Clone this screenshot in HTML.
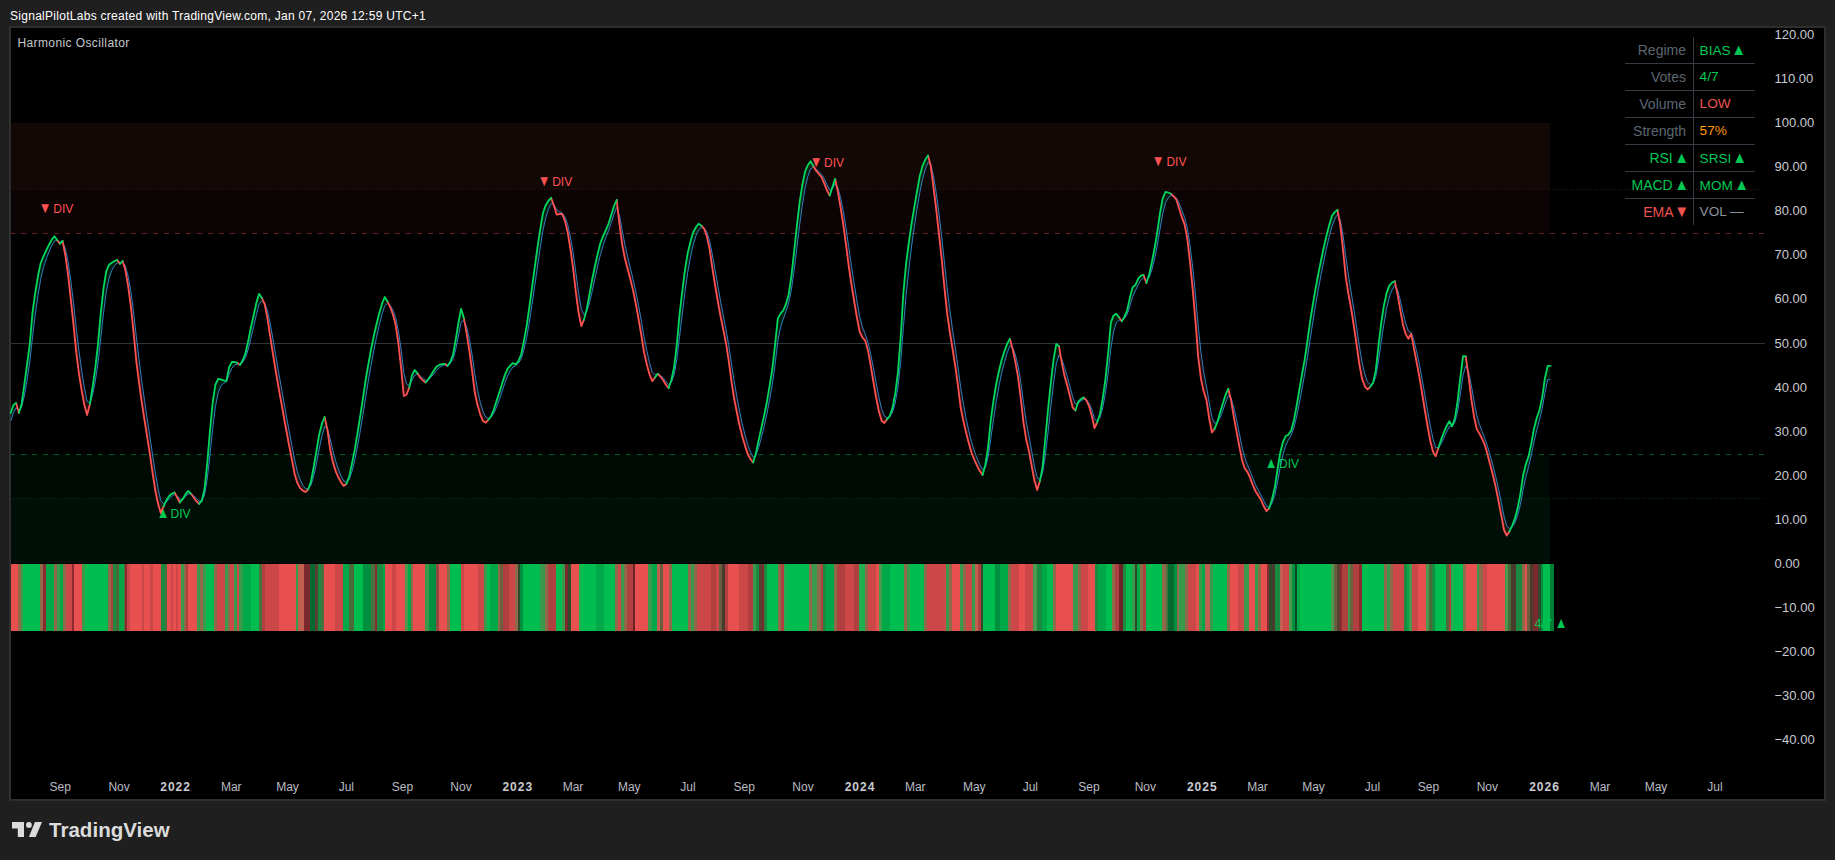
<!DOCTYPE html>
<html lang="en"><head><meta charset="utf-8"><title>Harmonic Oscillator</title>
<style>
html,body{margin:0;padding:0;background:#1f1f1f;}
body{width:1835px;height:860px;position:relative;overflow:hidden;font-family:"Liberation Sans",Arial,sans-serif;}
.hdr{position:absolute;left:10px;top:9px;font-size:12px;line-height:15px;color:#fff;white-space:nowrap;letter-spacing:0.28px;}
.frame{position:absolute;left:9px;top:26px;width:1813px;height:771px;border:2px solid #2e2e2e;background:#000;}
.chart{position:absolute;left:0;top:0;}
.ttl{position:absolute;left:17.4px;top:36px;font-size:12px;line-height:15px;color:#c4c6cc;white-space:nowrap;letter-spacing:0.4px;}
.div{position:absolute;font-size:12px;line-height:16px;white-space:nowrap;}
.tri{display:inline-block;font-size:14px;line-height:16px;width:8px;text-indent:-2.9px;margin-right:4px;transform:scale(0.92,1.1);transform-origin:50% 75%;vertical-align:top;position:relative;}
.tri.up{top:-1px;} .tri.dn{top:-0.6px;}
.pl{position:absolute;left:1774.5px;font-size:13px;line-height:16px;color:#c9cbd1;white-space:nowrap;}
.tl{position:absolute;top:779px;width:60px;text-align:center;font-size:12px;line-height:16px;color:#b9bbc2;white-space:nowrap;}
.tl.yr{font-weight:bold;letter-spacing:1px;color:#c9cbd1;text-indent:1px;}
.tbl{position:absolute;left:1625px;top:37px;width:130px;}
.tr{display:flex;height:26px;border-bottom:1px solid #363a45;}
.tr:last-child{border-bottom:none;}
.tc{font-size:14px;line-height:26px;white-space:nowrap;box-sizing:border-box;}
.tc.l{width:69px;text-align:right;padding-right:7px;border-right:1px solid #363a45;}
.tc.r{width:61px;text-align:left;padding-left:5.6px;font-size:13.6px;}
.tt{display:inline-block;font-size:15.5px;width:9.4px;text-indent:-3.1px;transform:scale(0.97,1.06);transform-origin:50% 75%;}
.gy{color:#5d6670;} .gy2{color:#8a939c;} .gr{color:#00c853;} .rd{color:#ef5350;} .or{color:#ff9800;}
.votes{position:absolute;left:1534.6px;top:615.5px;font-size:12.5px;line-height:16px;color:#00c853;white-space:nowrap;}
.logo{position:absolute;left:12px;top:822px;}
.logot{position:absolute;left:49px;top:817px;font-size:20.5px;line-height:26px;font-weight:bold;color:#dcdcdc;white-space:nowrap;letter-spacing:0.03px;}
</style></head><body>
<div class="hdr">SignalPilotLabs created with TradingView.com, Jan 07, 2026 12:59 UTC+1</div>
<div class="frame"></div>
<svg class="chart" width="1835" height="860" viewBox="0 0 1835 860">
<rect x="11" y="123" width="1539" height="66" fill="#120806"/>
<rect x="11" y="189" width="1539" height="45" fill="#0c0304"/>
<rect x="11" y="454" width="1539" height="44" fill="#000a05"/>
<rect x="11" y="498" width="1539" height="65" fill="#001008"/>
<g shape-rendering="crispEdges">
<line x1="11" x2="1764.5" y1="189.5" y2="189.5" stroke="#3b1818" stroke-width="1" stroke-dasharray="1 2" stroke-dashoffset="1"/>
<line x1="11" x2="1764.5" y1="233.5" y2="233.5" stroke="#642323" stroke-width="1" stroke-dasharray="5 6" stroke-dashoffset="1"/>
<line x1="11" x2="1764.5" y1="343.5" y2="343.5" stroke="#2d343a" stroke-width="1"/>
<line x1="11" x2="1764.5" y1="454.5" y2="454.5" stroke="#005a28" stroke-width="1" stroke-dasharray="5 6" stroke-dashoffset="1"/>
<line x1="11" x2="1764.5" y1="498.5" y2="498.5" stroke="#043819" stroke-width="1" stroke-dasharray="1 2" stroke-dashoffset="1"/>
</g>
<g shape-rendering="crispEdges">
<rect x="10.7" y="564.0" width="7.8" height="67.0" fill="#e85050"/>
<rect x="18.2" y="564.0" width="2.8" height="67.0" fill="#8f6a48"/>
<rect x="20.7" y="564.0" width="2.2" height="67.0" fill="#3a9a4c"/>
<rect x="22.6" y="564.0" width="17.9" height="67.0" fill="#00bd50"/>
<rect x="40.2" y="564.0" width="3.1" height="67.0" fill="#8f6a48"/>
<rect x="43.0" y="564.0" width="3.2" height="67.0" fill="#8b2a30"/>
<rect x="45.9" y="564.0" width="8.4" height="67.0" fill="#00a848"/>
<rect x="54.0" y="564.0" width="3.5" height="67.0" fill="#8f6a48"/>
<rect x="57.2" y="564.0" width="3.1" height="67.0" fill="#3a9a4c"/>
<rect x="60.0" y="564.0" width="3.3" height="67.0" fill="#00a848"/>
<rect x="63.0" y="564.0" width="3.3" height="67.0" fill="#8f6a48"/>
<rect x="66.0" y="564.0" width="6.5" height="67.0" fill="#cc4848"/>
<rect x="72.2" y="564.0" width="2.0" height="67.0" fill="#8b2a30"/>
<rect x="73.9" y="564.0" width="8.3" height="67.0" fill="#e85050"/>
<rect x="81.9" y="564.0" width="3.6" height="67.0" fill="#3a9a4c"/>
<rect x="85.2" y="564.0" width="23.1" height="67.0" fill="#00bd50"/>
<rect x="108.0" y="564.0" width="3.5" height="67.0" fill="#8f6a48"/>
<rect x="111.2" y="564.0" width="2.1" height="67.0" fill="#b04040"/>
<rect x="113.0" y="564.0" width="2.9" height="67.0" fill="#1a8a40"/>
<rect x="115.6" y="564.0" width="3.4" height="67.0" fill="#4a6a3a"/>
<rect x="118.7" y="564.0" width="5.3" height="67.0" fill="#00a848"/>
<rect x="123.7" y="564.0" width="2.0" height="67.0" fill="#4a7040"/>
<rect x="125.4" y="564.0" width="1.8" height="67.0" fill="#8b2a30"/>
<rect x="126.9" y="564.0" width="3.4" height="67.0" fill="#cc4848"/>
<rect x="130.0" y="564.0" width="12.3" height="67.0" fill="#e85050"/>
<rect x="142.0" y="564.0" width="2.1" height="67.0" fill="#cc4848"/>
<rect x="143.8" y="564.0" width="6.5" height="67.0" fill="#e85050"/>
<rect x="150.0" y="564.0" width="3.3" height="67.0" fill="#cc4848"/>
<rect x="153.0" y="564.0" width="8.1" height="67.0" fill="#e85050"/>
<rect x="160.8" y="564.0" width="4.1" height="67.0" fill="#1a8a40"/>
<rect x="164.6" y="564.0" width="2.7" height="67.0" fill="#4a7040"/>
<rect x="167.0" y="564.0" width="4.3" height="67.0" fill="#e85050"/>
<rect x="171.0" y="564.0" width="2.3" height="67.0" fill="#cc4848"/>
<rect x="173.0" y="564.0" width="3.3" height="67.0" fill="#e85050"/>
<rect x="176.0" y="564.0" width="2.3" height="67.0" fill="#cc4848"/>
<rect x="178.0" y="564.0" width="3.3" height="67.0" fill="#e85050"/>
<rect x="181.0" y="564.0" width="3.3" height="67.0" fill="#3a9a4c"/>
<rect x="184.0" y="564.0" width="2.3" height="67.0" fill="#8f6a48"/>
<rect x="186.0" y="564.0" width="2.7" height="67.0" fill="#b04040"/>
<rect x="188.4" y="564.0" width="8.9" height="67.0" fill="#e85050"/>
<rect x="197.0" y="564.0" width="3.0" height="67.0" fill="#3a9a4c"/>
<rect x="199.7" y="564.0" width="3.5" height="67.0" fill="#8f6a48"/>
<rect x="202.9" y="564.0" width="3.4" height="67.0" fill="#3a9a4c"/>
<rect x="206.0" y="564.0" width="8.5" height="67.0" fill="#00bd50"/>
<rect x="214.2" y="564.0" width="3.1" height="67.0" fill="#8f6a48"/>
<rect x="217.0" y="564.0" width="8.2" height="67.0" fill="#cc4848"/>
<rect x="224.9" y="564.0" width="3.4" height="67.0" fill="#3a9a4c"/>
<rect x="228.0" y="564.0" width="2.3" height="67.0" fill="#8f6a48"/>
<rect x="230.0" y="564.0" width="4.1" height="67.0" fill="#cc4848"/>
<rect x="233.8" y="564.0" width="3.4" height="67.0" fill="#3a9a4c"/>
<rect x="236.9" y="564.0" width="2.4" height="67.0" fill="#cc4848"/>
<rect x="239.0" y="564.0" width="3.9" height="67.0" fill="#3a9a4c"/>
<rect x="242.6" y="564.0" width="8.4" height="67.0" fill="#00a848"/>
<rect x="250.7" y="564.0" width="8.5" height="67.0" fill="#00bd50"/>
<rect x="258.9" y="564.0" width="3.4" height="67.0" fill="#4a7040"/>
<rect x="262.0" y="564.0" width="3.5" height="67.0" fill="#b04040"/>
<rect x="265.2" y="564.0" width="14.1" height="67.0" fill="#cc4848"/>
<rect x="279.0" y="564.0" width="17.3" height="67.0" fill="#e85050"/>
<rect x="296.0" y="564.0" width="2.1" height="67.0" fill="#3a9a4c"/>
<rect x="297.8" y="564.0" width="6.5" height="67.0" fill="#c06050"/>
<rect x="304.0" y="564.0" width="6.3" height="67.0" fill="#7a2a2c"/>
<rect x="310.0" y="564.0" width="5.7" height="67.0" fill="#066a30"/>
<rect x="315.4" y="564.0" width="2.9" height="67.0" fill="#5a4030"/>
<rect x="318.0" y="564.0" width="3.3" height="67.0" fill="#1a8a40"/>
<rect x="321.0" y="564.0" width="3.3" height="67.0" fill="#4a7040"/>
<rect x="324.0" y="564.0" width="11.2" height="67.0" fill="#e85050"/>
<rect x="334.9" y="564.0" width="8.4" height="67.0" fill="#cc4848"/>
<rect x="343.0" y="564.0" width="6.0" height="67.0" fill="#00a848"/>
<rect x="348.7" y="564.0" width="5.3" height="67.0" fill="#4a6a3a"/>
<rect x="353.7" y="564.0" width="9.8" height="67.0" fill="#00bd50"/>
<rect x="363.2" y="564.0" width="8.4" height="67.0" fill="#009040"/>
<rect x="371.3" y="564.0" width="3.5" height="67.0" fill="#4a7040"/>
<rect x="374.5" y="564.0" width="2.5" height="67.0" fill="#8b2a30"/>
<rect x="376.7" y="564.0" width="6.2" height="67.0" fill="#1a8a40"/>
<rect x="382.6" y="564.0" width="2.8" height="67.0" fill="#00a848"/>
<rect x="385.1" y="564.0" width="7.2" height="67.0" fill="#e85050"/>
<rect x="392.0" y="564.0" width="4.3" height="67.0" fill="#cc4848"/>
<rect x="396.0" y="564.0" width="9.5" height="67.0" fill="#e85050"/>
<rect x="405.2" y="564.0" width="3.5" height="67.0" fill="#4a9a50"/>
<rect x="408.4" y="564.0" width="3.0" height="67.0" fill="#00a848"/>
<rect x="411.1" y="564.0" width="2.6" height="67.0" fill="#8f6a48"/>
<rect x="413.4" y="564.0" width="11.9" height="67.0" fill="#e85050"/>
<rect x="425.0" y="564.0" width="3.8" height="67.0" fill="#3a9a4c"/>
<rect x="428.5" y="564.0" width="7.8" height="67.0" fill="#009040"/>
<rect x="436.0" y="564.0" width="3.5" height="67.0" fill="#904840"/>
<rect x="439.2" y="564.0" width="8.4" height="67.0" fill="#e85050"/>
<rect x="447.3" y="564.0" width="2.8" height="67.0" fill="#8f6a48"/>
<rect x="449.8" y="564.0" width="11.8" height="67.0" fill="#00bd50"/>
<rect x="461.3" y="564.0" width="2.8" height="67.0" fill="#cc4848"/>
<rect x="463.8" y="564.0" width="14.1" height="67.0" fill="#e85050"/>
<rect x="477.6" y="564.0" width="6.6" height="67.0" fill="#cc4848"/>
<rect x="483.9" y="564.0" width="3.4" height="67.0" fill="#3a9a4c"/>
<rect x="487.0" y="564.0" width="3.5" height="67.0" fill="#00bd50"/>
<rect x="490.2" y="564.0" width="7.8" height="67.0" fill="#00a848"/>
<rect x="497.7" y="564.0" width="2.8" height="67.0" fill="#8f6a48"/>
<rect x="500.2" y="564.0" width="3.4" height="67.0" fill="#6a6040"/>
<rect x="503.3" y="564.0" width="6.0" height="67.0" fill="#b04040"/>
<rect x="509.0" y="564.0" width="6.6" height="67.0" fill="#cc4848"/>
<rect x="515.3" y="564.0" width="2.8" height="67.0" fill="#8f6a48"/>
<rect x="517.8" y="564.0" width="2.5" height="67.0" fill="#304a2c"/>
<rect x="520.0" y="564.0" width="3.1" height="67.0" fill="#009040"/>
<rect x="522.8" y="564.0" width="17.9" height="67.0" fill="#00bd50"/>
<rect x="540.4" y="564.0" width="5.1" height="67.0" fill="#3a9a4c"/>
<rect x="545.2" y="564.0" width="3.1" height="67.0" fill="#8f6a48"/>
<rect x="548.0" y="564.0" width="8.4" height="67.0" fill="#b04040"/>
<rect x="556.1" y="564.0" width="6.2" height="67.0" fill="#00bd50"/>
<rect x="562.0" y="564.0" width="3.3" height="67.0" fill="#3a9a4c"/>
<rect x="565.0" y="564.0" width="3.3" height="67.0" fill="#7a2a2c"/>
<rect x="568.0" y="564.0" width="3.5" height="67.0" fill="#304a2c"/>
<rect x="571.2" y="564.0" width="7.8" height="67.0" fill="#e85050"/>
<rect x="578.7" y="564.0" width="2.8" height="67.0" fill="#20b050"/>
<rect x="581.2" y="564.0" width="15.4" height="67.0" fill="#00bd50"/>
<rect x="596.3" y="564.0" width="7.8" height="67.0" fill="#00a848"/>
<rect x="603.8" y="564.0" width="11.7" height="67.0" fill="#00bd50"/>
<rect x="615.2" y="564.0" width="3.4" height="67.0" fill="#8f6a48"/>
<rect x="618.3" y="564.0" width="3.0" height="67.0" fill="#cc4848"/>
<rect x="621.0" y="564.0" width="3.3" height="67.0" fill="#3a9a4c"/>
<rect x="624.0" y="564.0" width="3.3" height="67.0" fill="#8f6a48"/>
<rect x="627.0" y="564.0" width="6.0" height="67.0" fill="#b04040"/>
<rect x="632.7" y="564.0" width="2.5" height="67.0" fill="#6a2428"/>
<rect x="634.9" y="564.0" width="13.8" height="67.0" fill="#e85050"/>
<rect x="648.4" y="564.0" width="4.1" height="67.0" fill="#3a9a4c"/>
<rect x="652.2" y="564.0" width="5.1" height="67.0" fill="#00a848"/>
<rect x="657.0" y="564.0" width="3.0" height="67.0" fill="#c06050"/>
<rect x="659.7" y="564.0" width="3.5" height="67.0" fill="#6a6040"/>
<rect x="662.9" y="564.0" width="6.6" height="67.0" fill="#e85050"/>
<rect x="669.2" y="564.0" width="3.1" height="67.0" fill="#8f6a48"/>
<rect x="672.0" y="564.0" width="16.3" height="67.0" fill="#00bd50"/>
<rect x="688.0" y="564.0" width="3.6" height="67.0" fill="#8f6a48"/>
<rect x="691.3" y="564.0" width="3.0" height="67.0" fill="#3a9a4c"/>
<rect x="694.0" y="564.0" width="3.2" height="67.0" fill="#8f6a48"/>
<rect x="696.9" y="564.0" width="14.1" height="67.0" fill="#cc4848"/>
<rect x="710.7" y="564.0" width="6.0" height="67.0" fill="#b04040"/>
<rect x="716.4" y="564.0" width="3.0" height="67.0" fill="#cc4848"/>
<rect x="719.1" y="564.0" width="3.2" height="67.0" fill="#6a6040"/>
<rect x="722.0" y="564.0" width="3.2" height="67.0" fill="#4a3c2c"/>
<rect x="724.9" y="564.0" width="3.1" height="67.0" fill="#b04040"/>
<rect x="727.7" y="564.0" width="11.6" height="67.0" fill="#e85050"/>
<rect x="739.0" y="564.0" width="9.7" height="67.0" fill="#cc4848"/>
<rect x="748.4" y="564.0" width="4.7" height="67.0" fill="#b04040"/>
<rect x="752.8" y="564.0" width="3.5" height="67.0" fill="#3a9a4c"/>
<rect x="756.0" y="564.0" width="3.1" height="67.0" fill="#1a8a40"/>
<rect x="758.8" y="564.0" width="3.1" height="67.0" fill="#5a4030"/>
<rect x="761.6" y="564.0" width="2.6" height="67.0" fill="#7a2a2c"/>
<rect x="763.9" y="564.0" width="3.7" height="67.0" fill="#1a8a40"/>
<rect x="767.3" y="564.0" width="10.9" height="67.0" fill="#00bd50"/>
<rect x="777.9" y="564.0" width="3.5" height="67.0" fill="#8f6a48"/>
<rect x="781.1" y="564.0" width="3.2" height="67.0" fill="#b04040"/>
<rect x="784.0" y="564.0" width="3.0" height="67.0" fill="#20b050"/>
<rect x="786.7" y="564.0" width="22.3" height="67.0" fill="#00bd50"/>
<rect x="808.7" y="564.0" width="3.5" height="67.0" fill="#8f6a48"/>
<rect x="811.9" y="564.0" width="5.3" height="67.0" fill="#3a9a4c"/>
<rect x="816.9" y="564.0" width="4.1" height="67.0" fill="#8f6a48"/>
<rect x="820.7" y="564.0" width="2.5" height="67.0" fill="#b04040"/>
<rect x="822.9" y="564.0" width="3.7" height="67.0" fill="#1a8a40"/>
<rect x="826.3" y="564.0" width="7.8" height="67.0" fill="#00a848"/>
<rect x="833.8" y="564.0" width="3.5" height="67.0" fill="#8f6a48"/>
<rect x="837.0" y="564.0" width="8.5" height="67.0" fill="#b04040"/>
<rect x="845.2" y="564.0" width="9.1" height="67.0" fill="#cc4848"/>
<rect x="854.0" y="564.0" width="5.3" height="67.0" fill="#b04040"/>
<rect x="859.0" y="564.0" width="6.2" height="67.0" fill="#20b050"/>
<rect x="864.9" y="564.0" width="3.2" height="67.0" fill="#8f6a48"/>
<rect x="867.8" y="564.0" width="8.4" height="67.0" fill="#cc4848"/>
<rect x="875.9" y="564.0" width="3.5" height="67.0" fill="#e85050"/>
<rect x="879.1" y="564.0" width="3.2" height="67.0" fill="#4a9a50"/>
<rect x="882.0" y="564.0" width="8.0" height="67.0" fill="#00a848"/>
<rect x="889.7" y="564.0" width="14.8" height="67.0" fill="#00bd50"/>
<rect x="904.2" y="564.0" width="3.2" height="67.0" fill="#8f6a48"/>
<rect x="907.1" y="564.0" width="3.0" height="67.0" fill="#3a9a4c"/>
<rect x="909.8" y="564.0" width="14.5" height="67.0" fill="#00bd50"/>
<rect x="924.0" y="564.0" width="3.2" height="67.0" fill="#8f6a48"/>
<rect x="926.9" y="564.0" width="19.2" height="67.0" fill="#cc4848"/>
<rect x="945.8" y="564.0" width="3.4" height="67.0" fill="#3a9a4c"/>
<rect x="948.9" y="564.0" width="3.4" height="67.0" fill="#8f6a48"/>
<rect x="952.0" y="564.0" width="8.5" height="67.0" fill="#e85050"/>
<rect x="960.2" y="564.0" width="3.1" height="67.0" fill="#3a9a4c"/>
<rect x="963.0" y="564.0" width="3.2" height="67.0" fill="#8f6a48"/>
<rect x="965.9" y="564.0" width="6.2" height="67.0" fill="#cc4848"/>
<rect x="971.8" y="564.0" width="3.8" height="67.0" fill="#3a9a4c"/>
<rect x="975.3" y="564.0" width="3.4" height="67.0" fill="#c06050"/>
<rect x="978.4" y="564.0" width="2.8" height="67.0" fill="#b04040"/>
<rect x="980.9" y="564.0" width="2.2" height="67.0" fill="#304a2c"/>
<rect x="982.8" y="564.0" width="12.6" height="67.0" fill="#00bd50"/>
<rect x="995.1" y="564.0" width="5.0" height="67.0" fill="#009040"/>
<rect x="999.8" y="564.0" width="8.5" height="67.0" fill="#00a848"/>
<rect x="1008.0" y="564.0" width="3.3" height="67.0" fill="#8f6a48"/>
<rect x="1011.0" y="564.0" width="7.9" height="67.0" fill="#cc4848"/>
<rect x="1018.6" y="564.0" width="6.6" height="67.0" fill="#e85050"/>
<rect x="1024.9" y="564.0" width="8.4" height="67.0" fill="#cc4848"/>
<rect x="1033.0" y="564.0" width="4.1" height="67.0" fill="#4a9a50"/>
<rect x="1036.8" y="564.0" width="5.4" height="67.0" fill="#1a8a40"/>
<rect x="1041.9" y="564.0" width="5.4" height="67.0" fill="#00a848"/>
<rect x="1047.0" y="564.0" width="6.5" height="67.0" fill="#00bd50"/>
<rect x="1053.2" y="564.0" width="3.1" height="67.0" fill="#8f6a48"/>
<rect x="1056.0" y="564.0" width="17.3" height="67.0" fill="#e85050"/>
<rect x="1073.0" y="564.0" width="5.3" height="67.0" fill="#3a9a4c"/>
<rect x="1078.0" y="564.0" width="3.3" height="67.0" fill="#8f6a48"/>
<rect x="1081.0" y="564.0" width="7.6" height="67.0" fill="#cc4848"/>
<rect x="1088.3" y="564.0" width="7.2" height="67.0" fill="#e85050"/>
<rect x="1095.2" y="564.0" width="2.9" height="67.0" fill="#1a8a40"/>
<rect x="1097.8" y="564.0" width="8.5" height="67.0" fill="#00a848"/>
<rect x="1106.0" y="564.0" width="6.5" height="67.0" fill="#00bd50"/>
<rect x="1112.2" y="564.0" width="3.1" height="67.0" fill="#8f6a48"/>
<rect x="1115.0" y="564.0" width="3.8" height="67.0" fill="#b04040"/>
<rect x="1118.5" y="564.0" width="4.7" height="67.0" fill="#6a2428"/>
<rect x="1122.9" y="564.0" width="3.4" height="67.0" fill="#1a8a40"/>
<rect x="1126.0" y="564.0" width="6.6" height="67.0" fill="#00bd50"/>
<rect x="1132.3" y="564.0" width="3.0" height="67.0" fill="#3a9a4c"/>
<rect x="1135.0" y="564.0" width="2.0" height="67.0" fill="#304a2c"/>
<rect x="1136.7" y="564.0" width="3.4" height="67.0" fill="#00a848"/>
<rect x="1139.8" y="564.0" width="3.5" height="67.0" fill="#8f6a48"/>
<rect x="1143.0" y="564.0" width="3.2" height="67.0" fill="#b04040"/>
<rect x="1145.9" y="564.0" width="16.3" height="67.0" fill="#00bd50"/>
<rect x="1161.9" y="564.0" width="4.1" height="67.0" fill="#8f6a48"/>
<rect x="1165.7" y="564.0" width="2.6" height="67.0" fill="#4a7040"/>
<rect x="1168.0" y="564.0" width="6.2" height="67.0" fill="#066a30"/>
<rect x="1173.9" y="564.0" width="3.4" height="67.0" fill="#009040"/>
<rect x="1177.0" y="564.0" width="2.4" height="67.0" fill="#8f6a48"/>
<rect x="1179.1" y="564.0" width="6.1" height="67.0" fill="#3a9a4c"/>
<rect x="1184.9" y="564.0" width="3.1" height="67.0" fill="#8f6a48"/>
<rect x="1187.7" y="564.0" width="8.5" height="67.0" fill="#cc4848"/>
<rect x="1195.9" y="564.0" width="3.4" height="67.0" fill="#e85050"/>
<rect x="1199.0" y="564.0" width="3.1" height="67.0" fill="#3a9a4c"/>
<rect x="1201.8" y="564.0" width="3.8" height="67.0" fill="#00a848"/>
<rect x="1205.3" y="564.0" width="5.0" height="67.0" fill="#c06050"/>
<rect x="1210.0" y="564.0" width="3.1" height="67.0" fill="#3a9a4c"/>
<rect x="1212.8" y="564.0" width="14.4" height="67.0" fill="#00bd50"/>
<rect x="1226.9" y="564.0" width="3.2" height="67.0" fill="#8f6a48"/>
<rect x="1229.8" y="564.0" width="8.4" height="67.0" fill="#e85050"/>
<rect x="1237.9" y="564.0" width="6.4" height="67.0" fill="#cc4848"/>
<rect x="1244.0" y="564.0" width="5.3" height="67.0" fill="#3a9a4c"/>
<rect x="1249.0" y="564.0" width="6.2" height="67.0" fill="#e85050"/>
<rect x="1254.9" y="564.0" width="3.4" height="67.0" fill="#3a9a4c"/>
<rect x="1258.0" y="564.0" width="3.2" height="67.0" fill="#8f6a48"/>
<rect x="1260.9" y="564.0" width="6.2" height="67.0" fill="#e85050"/>
<rect x="1266.8" y="564.0" width="2.2" height="67.0" fill="#8b2a30"/>
<rect x="1268.7" y="564.0" width="3.5" height="67.0" fill="#304a2c"/>
<rect x="1271.9" y="564.0" width="3.4" height="67.0" fill="#4a3c2c"/>
<rect x="1275.0" y="564.0" width="5.3" height="67.0" fill="#1a8a40"/>
<rect x="1280.0" y="564.0" width="3.5" height="67.0" fill="#c06050"/>
<rect x="1283.2" y="564.0" width="5.9" height="67.0" fill="#cc4848"/>
<rect x="1288.8" y="564.0" width="3.5" height="67.0" fill="#4a9a50"/>
<rect x="1292.0" y="564.0" width="3.4" height="67.0" fill="#009040"/>
<rect x="1295.1" y="564.0" width="1.9" height="67.0" fill="#064a28"/>
<rect x="1296.7" y="564.0" width="3.6" height="67.0" fill="#00a848"/>
<rect x="1300.0" y="564.0" width="31.2" height="67.0" fill="#00bd50"/>
<rect x="1330.9" y="564.0" width="3.4" height="67.0" fill="#4a9a50"/>
<rect x="1334.0" y="564.0" width="3.5" height="67.0" fill="#6a6040"/>
<rect x="1337.2" y="564.0" width="3.4" height="67.0" fill="#5a4030"/>
<rect x="1340.3" y="564.0" width="2.2" height="67.0" fill="#8b2a30"/>
<rect x="1342.2" y="564.0" width="6.0" height="67.0" fill="#b04040"/>
<rect x="1347.9" y="564.0" width="2.8" height="67.0" fill="#3a9a4c"/>
<rect x="1350.4" y="564.0" width="3.2" height="67.0" fill="#6a6040"/>
<rect x="1353.3" y="564.0" width="6.2" height="67.0" fill="#b04040"/>
<rect x="1359.2" y="564.0" width="3.1" height="67.0" fill="#8b2a30"/>
<rect x="1362.0" y="564.0" width="22.3" height="67.0" fill="#00bd50"/>
<rect x="1384.0" y="564.0" width="3.2" height="67.0" fill="#8f6a48"/>
<rect x="1386.9" y="564.0" width="3.4" height="67.0" fill="#3a9a4c"/>
<rect x="1390.0" y="564.0" width="3.5" height="67.0" fill="#8f6a48"/>
<rect x="1393.2" y="564.0" width="11.0" height="67.0" fill="#cc4848"/>
<rect x="1403.9" y="564.0" width="3.4" height="67.0" fill="#1a8a40"/>
<rect x="1407.0" y="564.0" width="2.4" height="67.0" fill="#00a848"/>
<rect x="1409.1" y="564.0" width="3.2" height="67.0" fill="#4a9a50"/>
<rect x="1412.0" y="564.0" width="6.0" height="67.0" fill="#cc4848"/>
<rect x="1417.7" y="564.0" width="8.5" height="67.0" fill="#e85050"/>
<rect x="1425.9" y="564.0" width="3.4" height="67.0" fill="#4a9a50"/>
<rect x="1429.0" y="564.0" width="3.1" height="67.0" fill="#4a6a3a"/>
<rect x="1431.8" y="564.0" width="3.4" height="67.0" fill="#1a8a40"/>
<rect x="1434.9" y="564.0" width="11.4" height="67.0" fill="#00bd50"/>
<rect x="1446.0" y="564.0" width="3.1" height="67.0" fill="#4a6a3a"/>
<rect x="1448.8" y="564.0" width="2.5" height="67.0" fill="#b04040"/>
<rect x="1451.0" y="564.0" width="3.4" height="67.0" fill="#20b050"/>
<rect x="1454.1" y="564.0" width="9.1" height="67.0" fill="#00bd50"/>
<rect x="1462.9" y="564.0" width="3.5" height="67.0" fill="#8f6a48"/>
<rect x="1466.1" y="564.0" width="10.9" height="67.0" fill="#e85050"/>
<rect x="1476.7" y="564.0" width="2.8" height="67.0" fill="#3a9a4c"/>
<rect x="1479.2" y="564.0" width="4.1" height="67.0" fill="#8f6a48"/>
<rect x="1483.0" y="564.0" width="4.7" height="67.0" fill="#cc4848"/>
<rect x="1487.4" y="564.0" width="17.9" height="67.0" fill="#e85050"/>
<rect x="1505.0" y="564.0" width="3.4" height="67.0" fill="#4a9a50"/>
<rect x="1508.1" y="564.0" width="3.5" height="67.0" fill="#4a6a3a"/>
<rect x="1511.3" y="564.0" width="4.9" height="67.0" fill="#4a3c2c"/>
<rect x="1515.9" y="564.0" width="6.4" height="67.0" fill="#1a8a40"/>
<rect x="1522.0" y="564.0" width="2.8" height="67.0" fill="#8f6a48"/>
<rect x="1524.5" y="564.0" width="3.0" height="67.0" fill="#e85050"/>
<rect x="1527.2" y="564.0" width="3.2" height="67.0" fill="#6a6040"/>
<rect x="1530.1" y="564.0" width="3.2" height="67.0" fill="#4a3c2c"/>
<rect x="1533.0" y="564.0" width="5.3" height="67.0" fill="#7a2a2c"/>
<rect x="1538.0" y="564.0" width="3.1" height="67.0" fill="#304a2c"/>
<rect x="1540.8" y="564.0" width="2.8" height="67.0" fill="#009040"/>
<rect x="1543.3" y="564.0" width="7.1" height="67.0" fill="#00bd50"/>
<rect x="1550.1" y="564.0" width="3.4" height="67.0" fill="#008035"/>
</g>
<path d="M10.7 413.0 L13.4 405.0 L16.1 403.0 L18.9 413.0 L18.9 410.5 L16.1 408.0 L13.4 413.0 L10.7 421.0Z M21.6 403.9 L24.3 384.6 L27.1 364.2 L29.8 344.0 L32.5 312.4 L35.2 293.0 L38.0 275.8 L40.7 263.0 L43.4 256.3 L46.2 250.3 L48.9 244.9 L51.6 239.8 L54.4 236.2 L57.1 240.0 L59.8 243.8 L59.8 242.1 L57.1 240.5 L54.4 241.1 L51.6 245.9 L48.9 252.0 L46.2 259.0 L43.4 267.7 L40.7 279.2 L38.0 295.5 L35.2 315.1 L32.5 337.2 L29.8 362.0 L27.1 380.1 L24.3 395.9 L21.6 407.2Z M62.6 241.0 L65.3 255.0 L65.3 248.3 L62.6 241.6Z M92.6 387.0 L95.3 367.9 L98.0 344.2 L100.8 312.9 L103.5 288.3 L106.2 271.5 L109.0 264.7 L111.7 262.7 L114.4 261.1 L117.2 260.0 L119.9 263.8 L119.9 263.3 L117.2 262.9 L114.4 265.8 L111.7 270.6 L109.0 278.5 L106.2 292.3 L103.5 313.1 L100.8 337.8 L98.0 362.8 L95.3 381.4 L92.6 394.9Z M122.6 261.0 L125.3 269.9 L125.3 266.0 L122.6 262.2Z M166.3 500.3 L169.0 496.2 L171.8 493.8 L174.5 492.5 L177.2 497.5 L177.2 496.0 L174.5 494.5 L171.8 496.5 L169.0 499.1 L166.3 502.0Z M182.7 499.1 L185.4 494.4 L188.1 491.0 L190.9 493.6 L193.6 497.4 L193.6 495.6 L190.9 493.7 L188.1 493.9 L185.4 496.8 L182.7 499.2Z M201.8 500.7 L204.5 489.3 L207.2 463.5 L210.0 430.3 L212.7 402.4 L215.4 384.7 L218.2 378.8 L220.9 379.4 L223.6 380.3 L226.4 381.0 L229.1 367.1 L231.8 362.0 L234.5 362.0 L237.3 362.8 L240.0 365.0 L240.0 364.5 L237.3 364.0 L234.5 365.2 L231.8 368.3 L229.1 374.6 L226.4 382.1 L223.6 383.2 L220.9 386.1 L218.2 392.7 L215.4 406.7 L212.7 428.6 L210.0 454.8 L207.2 479.3 L204.5 495.1 L201.8 500.9Z M242.7 360.3 L245.5 353.2 L248.2 341.0 L250.9 327.4 L253.7 315.0 L256.4 302.6 L259.1 293.8 L261.8 297.9 L264.6 304.0 L264.6 302.5 L261.8 301.0 L259.1 304.2 L256.4 314.7 L253.7 326.7 L250.9 338.4 L248.2 349.4 L245.5 357.8 L242.7 362.4Z M311.0 481.4 L313.7 467.0 L316.4 451.2 L319.2 434.4 L321.9 423.7 L324.6 417.0 L327.4 429.8 L327.4 428.2 L324.6 426.7 L321.9 436.4 L319.2 449.0 L316.4 463.7 L313.7 476.1 L311.0 485.2Z M349.2 476.5 L351.9 463.9 L354.7 449.9 L357.4 433.6 L360.1 416.7 L362.9 398.4 L365.6 380.2 L368.3 364.3 L371.0 349.6 L373.8 335.8 L376.5 324.2 L379.2 313.3 L382.0 303.7 L384.7 297.0 L387.4 301.2 L390.2 307.3 L390.2 305.4 L387.4 303.5 L384.7 305.8 L382.0 314.5 L379.2 325.3 L376.5 337.4 L373.8 350.6 L371.0 365.3 L368.3 381.0 L365.6 397.7 L362.9 415.2 L360.1 431.9 L357.4 447.2 L354.7 460.7 L351.9 471.6 L349.2 479.4Z M412.0 375.1 L414.7 370.0 L417.5 373.3 L420.2 377.7 L420.2 376.0 L417.5 374.2 L414.7 375.2 L412.0 380.3Z M428.4 379.1 L431.1 374.9 L433.8 370.5 L436.6 366.5 L439.3 364.9 L442.0 364.2 L444.8 363.8 L447.5 366.0 L447.5 365.4 L444.8 364.8 L442.0 365.9 L439.3 367.6 L436.6 370.2 L433.8 373.9 L431.1 377.3 L428.4 379.8Z M450.2 362.0 L452.9 355.2 L455.7 339.6 L458.4 322.8 L461.1 308.8 L463.9 318.2 L466.6 333.4 L466.6 326.9 L463.9 320.3 L461.1 322.4 L458.4 336.1 L455.7 349.5 L452.9 359.5 L450.2 363.7Z M491.2 415.9 L493.9 409.3 L496.6 400.8 L499.4 392.2 L502.1 383.5 L504.8 375.1 L507.5 368.9 L510.3 365.4 L513.0 363.0 L515.7 364.5 L518.5 360.9 L521.2 354.3 L523.9 340.8 L526.7 325.6 L529.4 306.6 L532.1 286.5 L534.8 266.6 L537.6 246.6 L540.3 228.7 L543.0 213.0 L545.8 204.9 L548.5 200.7 L551.2 198.0 L554.0 206.0 L554.0 204.8 L551.2 203.6 L548.5 209.1 L545.8 217.5 L543.0 230.2 L540.3 247.4 L537.6 266.0 L534.8 285.4 L532.1 304.3 L529.4 322.1 L526.7 337.7 L523.9 349.8 L521.2 358.8 L518.5 363.3 L515.7 365.7 L513.0 366.9 L510.3 370.8 L507.5 376.1 L504.8 383.3 L502.1 391.6 L499.4 399.6 L496.6 407.0 L493.9 413.2 L491.2 417.1Z M586.7 309.3 L589.4 294.6 L592.2 279.3 L594.9 266.3 L597.6 254.1 L600.4 243.0 L603.1 236.1 L605.8 230.1 L608.6 223.5 L611.3 214.7 L614.0 206.0 L616.7 200.0 L619.5 224.3 L619.5 215.7 L616.7 207.2 L614.0 214.4 L611.3 222.7 L608.6 230.6 L605.8 237.7 L603.1 245.4 L600.4 254.7 L597.6 266.4 L594.9 278.8 L592.2 291.3 L589.4 303.2 L586.7 311.9Z M657.7 373.8 L660.4 376.5 L660.4 375.4 L657.7 374.2Z M671.3 380.2 L674.1 367.3 L676.8 344.5 L679.5 314.8 L682.3 290.7 L685.0 269.6 L687.7 253.1 L690.5 241.5 L693.2 232.2 L695.9 227.2 L698.6 223.8 L701.4 225.7 L704.1 228.6 L704.1 228.2 L701.4 227.7 L698.6 229.8 L695.9 235.9 L693.2 244.6 L690.5 257.0 L687.7 272.4 L685.0 291.8 L682.3 314.0 L679.5 337.2 L676.8 359.7 L674.1 374.9 L671.3 382.5Z M756.0 452.9 L758.7 439.9 L761.4 427.6 L764.2 415.0 L766.9 401.7 L769.6 385.8 L772.4 368.0 L775.1 344.4 L777.8 318.7 L780.5 313.6 L783.3 310.3 L786.0 303.8 L788.7 294.5 L791.5 275.1 L794.2 250.5 L796.9 225.8 L799.7 201.7 L802.4 184.6 L805.1 171.5 L807.8 165.2 L810.6 161.2 L813.3 165.7 L816.0 170.7 L816.0 169.0 L813.3 167.3 L810.6 168.9 L807.8 176.6 L805.1 188.1 L802.4 204.7 L799.7 224.7 L796.9 247.8 L794.2 269.8 L791.5 289.0 L788.7 302.9 L786.0 311.4 L783.3 318.9 L780.5 327.5 L777.8 341.4 L775.1 364.2 L772.4 384.0 L769.6 399.9 L766.9 414.0 L764.2 426.3 L761.4 437.6 L758.7 447.5 L756.0 455.1Z M832.4 187.1 L835.1 178.8 L837.9 191.8 L837.9 187.8 L835.1 183.7 L832.4 188.6Z M889.7 416.1 L892.5 407.9 L895.2 393.7 L897.9 372.6 L900.7 337.1 L903.4 292.3 L906.1 263.5 L908.9 242.2 L911.6 223.3 L914.3 207.2 L917.0 191.5 L919.8 175.9 L922.5 166.1 L925.2 159.8 L928.0 155.5 L930.7 165.8 L930.7 164.1 L928.0 162.5 L925.2 169.6 L922.5 179.3 L919.8 192.5 L917.0 209.1 L914.3 226.7 L911.6 246.1 L908.9 268.8 L906.1 295.5 L903.4 327.4 L900.7 362.5 L897.9 387.8 L895.2 403.0 L892.5 412.4 L889.7 416.9Z M985.3 465.0 L988.0 448.1 L990.8 419.8 L993.5 400.5 L996.2 384.0 L998.9 371.3 L1001.7 359.7 L1004.4 351.3 L1007.1 343.9 L1009.9 338.8 L1012.6 348.9 L1012.6 347.4 L1009.9 345.9 L1007.1 353.0 L1004.4 362.2 L1001.7 373.1 L998.9 386.5 L996.2 401.8 L993.5 419.7 L990.8 438.8 L988.0 457.8 L985.3 467.4Z M1042.6 466.8 L1045.4 437.1 L1048.1 408.9 L1050.8 383.0 L1053.5 359.7 L1056.3 343.8 L1059.0 346.2 L1061.7 362.4 L1061.7 358.7 L1059.0 355.0 L1056.3 363.7 L1053.5 383.6 L1050.8 407.5 L1048.1 432.0 L1045.4 455.1 L1042.6 473.1Z M1078.1 402.2 L1080.8 399.1 L1083.6 397.5 L1086.3 400.1 L1086.3 399.7 L1083.6 399.3 L1080.8 401.1 L1078.1 403.0Z M1100.0 414.0 L1102.7 398.5 L1105.4 379.3 L1108.1 353.5 L1110.9 322.3 L1113.6 315.4 L1116.3 313.8 L1119.1 317.5 L1121.8 321.2 L1121.8 320.7 L1119.1 320.1 L1116.3 322.7 L1113.6 331.7 L1110.9 348.0 L1108.1 373.6 L1105.4 393.6 L1102.7 407.9 L1100.0 417.4Z M1124.5 316.6 L1127.2 310.0 L1130.0 297.1 L1132.7 287.1 L1135.4 285.0 L1138.2 278.7 L1140.9 275.6 L1143.6 275.0 L1146.4 283.0 L1146.4 280.3 L1143.6 277.6 L1140.9 280.2 L1138.2 284.7 L1135.4 290.7 L1132.7 296.4 L1130.0 305.7 L1127.2 314.3 L1124.5 318.6Z M1149.1 274.9 L1151.8 262.5 L1154.6 248.0 L1157.3 231.8 L1160.0 213.2 L1162.7 198.5 L1165.5 191.8 L1168.2 192.5 L1170.9 193.7 L1173.7 196.4 L1173.7 196.0 L1170.9 195.7 L1168.2 197.7 L1165.5 202.8 L1162.7 213.9 L1160.0 229.3 L1157.3 245.4 L1154.6 259.0 L1151.8 270.0 L1149.1 277.6Z M1217.3 422.2 L1220.1 412.6 L1222.8 403.4 L1225.5 394.9 L1228.3 388.8 L1231.0 400.0 L1231.0 397.8 L1228.3 395.7 L1225.5 402.7 L1222.8 410.5 L1220.1 417.6 L1217.3 422.6Z M1271.9 499.8 L1274.7 487.9 L1277.4 470.2 L1280.1 453.3 L1282.9 442.2 L1285.6 436.0 L1288.3 434.8 L1291.1 430.5 L1293.8 420.7 L1296.5 406.4 L1299.2 390.7 L1302.0 374.1 L1304.7 359.5 L1307.4 341.2 L1310.2 320.9 L1312.9 303.8 L1315.6 288.3 L1318.4 273.3 L1321.1 260.0 L1323.8 247.3 L1326.5 235.4 L1329.3 224.7 L1332.0 215.7 L1334.7 212.1 L1337.5 210.0 L1340.2 224.7 L1340.2 219.6 L1337.5 214.5 L1334.7 219.1 L1332.0 226.0 L1329.3 236.4 L1326.5 248.2 L1323.8 260.9 L1321.1 274.6 L1318.4 289.1 L1315.6 304.9 L1312.9 321.6 L1310.2 339.3 L1307.4 357.7 L1304.7 374.2 L1302.0 389.0 L1299.2 403.9 L1296.5 417.2 L1293.8 428.0 L1291.1 435.3 L1288.3 440.2 L1285.6 445.6 L1282.9 455.1 L1280.1 468.1 L1277.4 482.9 L1274.7 495.7 L1271.9 503.5Z M1373.0 383.1 L1375.7 370.9 L1378.4 346.5 L1381.1 323.7 L1383.9 305.4 L1386.6 293.1 L1389.3 285.6 L1392.1 282.5 L1394.8 281.2 L1397.5 294.1 L1397.5 289.8 L1394.8 285.5 L1392.1 289.8 L1389.3 297.1 L1386.6 308.6 L1383.9 324.1 L1381.1 342.8 L1378.4 361.9 L1375.7 377.3 L1373.0 383.8Z M1441.2 439.4 L1443.9 432.2 L1446.7 425.8 L1449.4 421.2 L1452.1 426.2 L1454.9 418.3 L1457.6 401.1 L1460.3 377.8 L1463.0 356.2 L1465.8 356.3 L1468.5 376.1 L1468.5 371.0 L1465.8 365.9 L1463.0 375.5 L1460.3 394.8 L1457.6 411.7 L1454.9 422.3 L1452.1 426.4 L1449.4 426.5 L1446.7 431.8 L1443.9 437.9 L1441.2 443.6Z M1512.2 525.5 L1514.9 518.4 L1517.6 508.3 L1520.4 493.8 L1523.1 475.2 L1525.8 464.3 L1528.6 456.4 L1531.3 443.4 L1534.0 428.5 L1536.8 417.8 L1539.5 410.0 L1542.2 397.4 L1544.9 378.2 L1547.7 365.9 L1550.4 365.9 L1550.4 379.6 L1547.7 379.6 L1544.9 393.4 L1542.2 408.7 L1539.5 419.9 L1536.8 429.8 L1534.0 441.8 L1531.3 455.1 L1528.6 466.8 L1525.8 477.1 L1523.1 490.0 L1520.4 504.7 L1517.6 515.5 L1514.9 522.8 L1512.2 527.1Z" fill="#00c853" fill-opacity="0.15" stroke="none"/>
<path d="M18.9 413.0 L21.6 403.9 L21.6 407.2 L18.9 410.5Z M59.8 243.8 L62.6 241.0 L62.6 241.6 L59.8 242.1Z M65.3 255.0 L68.0 274.2 L70.7 298.6 L73.5 324.7 L76.2 352.2 L78.9 373.3 L81.7 390.9 L84.4 405.0 L87.1 415.0 L89.9 404.1 L92.6 387.0 L92.6 394.9 L89.9 402.8 L87.1 401.4 L84.4 387.8 L81.7 370.6 L78.9 350.3 L76.2 327.3 L73.5 302.3 L70.7 279.9 L68.0 261.2 L65.3 248.3Z M119.9 263.8 L122.6 261.0 L122.6 262.2 L119.9 263.3Z M125.3 269.9 L128.1 285.8 L130.8 306.2 L133.5 331.7 L136.3 361.3 L139.0 382.3 L141.7 401.9 L144.5 420.1 L147.2 437.2 L149.9 454.4 L152.6 473.2 L155.4 491.3 L158.1 504.1 L160.8 513.0 L163.6 506.3 L166.3 500.3 L166.3 502.0 L163.6 503.6 L160.8 500.8 L158.1 488.6 L155.4 473.1 L152.6 454.9 L149.9 436.6 L147.2 418.8 L144.5 400.4 L141.7 380.6 L139.0 359.3 L136.3 336.4 L133.5 311.4 L130.8 291.1 L128.1 275.9 L125.3 266.0Z M177.2 497.5 L179.9 502.5 L182.7 499.1 L182.7 499.2 L179.9 499.2 L177.2 496.0Z M193.6 497.4 L196.3 501.2 L199.1 503.8 L201.8 500.7 L201.8 500.9 L199.1 501.1 L196.3 498.4 L193.6 495.6Z M240.0 365.0 L242.7 360.3 L242.7 362.4 L240.0 364.5Z M264.6 304.0 L267.3 317.7 L270.0 335.2 L272.8 353.4 L275.5 369.8 L278.2 385.6 L281.0 401.2 L283.7 416.4 L286.4 431.0 L289.1 445.5 L291.9 459.9 L294.6 474.0 L297.3 483.0 L300.1 488.1 L302.8 490.7 L305.5 492.0 L308.2 489.3 L311.0 481.4 L311.0 485.2 L308.2 488.9 L305.5 488.6 L302.8 485.2 L300.1 479.7 L297.3 471.3 L294.6 459.6 L291.9 445.3 L289.1 430.7 L286.4 416.0 L283.7 400.9 L281.0 385.5 L278.2 369.8 L275.5 353.9 L272.8 338.0 L270.0 322.6 L267.3 310.1 L264.6 302.5Z M327.4 429.8 L330.1 449.2 L332.8 462.0 L335.6 471.2 L338.3 477.3 L341.0 482.4 L343.7 486.0 L346.5 483.7 L349.2 476.5 L349.2 479.4 L346.5 482.3 L343.7 480.9 L341.0 475.7 L338.3 469.0 L335.6 460.8 L332.8 450.4 L330.1 438.7 L327.4 428.2Z M390.2 307.3 L392.9 314.4 L395.6 324.8 L398.3 343.0 L401.1 367.9 L403.8 396.0 L406.5 394.8 L409.3 387.5 L412.0 375.1 L412.0 380.3 L409.3 385.6 L406.5 383.6 L403.8 372.5 L401.1 349.0 L398.3 330.2 L395.6 317.3 L392.9 309.9 L390.2 305.4Z M420.2 377.7 L422.9 380.5 L425.6 382.5 L428.4 379.1 L428.4 379.8 L425.6 380.4 L422.9 378.2 L420.2 376.0Z M447.5 366.0 L450.2 362.0 L450.2 363.7 L447.5 365.4Z M466.6 333.4 L469.3 350.6 L472.1 371.2 L474.8 392.8 L477.5 405.1 L480.2 414.3 L483.0 421.2 L485.7 422.5 L488.4 419.8 L491.2 415.9 L491.2 417.1 L488.4 418.4 L485.7 417.0 L483.0 411.5 L480.2 401.9 L477.5 389.5 L474.8 373.9 L472.1 355.0 L469.3 338.8 L466.6 326.9Z M554.0 206.0 L556.7 214.5 L559.4 214.1 L562.1 213.8 L564.9 220.9 L567.6 231.9 L570.3 248.3 L573.1 268.3 L575.8 292.1 L578.5 312.3 L581.3 326.2 L584.0 319.7 L586.7 309.3 L586.7 311.9 L584.0 314.5 L581.3 309.2 L578.5 292.2 L575.8 272.2 L573.1 252.3 L570.3 236.4 L567.6 224.4 L564.9 216.9 L562.1 212.8 L559.4 211.9 L556.7 209.6 L554.0 204.8Z M619.5 224.3 L622.2 244.7 L624.9 258.5 L627.7 269.2 L630.4 279.5 L633.1 290.6 L635.9 304.6 L638.6 319.4 L641.3 335.0 L644.0 352.4 L646.8 364.5 L649.5 374.5 L652.2 381.2 L655.0 377.5 L657.7 373.8 L657.7 374.2 L655.0 374.7 L652.2 371.8 L649.5 362.4 L646.8 350.4 L644.0 336.4 L641.3 320.4 L638.6 305.7 L635.9 292.0 L633.1 279.4 L630.4 268.1 L627.7 256.8 L624.9 244.4 L622.2 230.2 L619.5 215.7Z M660.4 376.5 L663.2 380.2 L665.9 384.7 L668.6 388.2 L671.3 380.2 L671.3 382.5 L668.6 384.8 L665.9 381.3 L663.2 377.8 L660.4 375.4Z M704.1 228.6 L706.8 236.0 L709.6 249.3 L712.3 267.8 L715.0 284.9 L717.8 301.3 L720.5 316.2 L723.2 329.3 L725.9 342.7 L728.7 360.6 L731.4 381.2 L734.1 398.6 L736.9 412.7 L739.6 425.8 L742.3 436.6 L745.1 446.1 L747.8 454.4 L750.5 459.2 L753.2 462.5 L756.0 452.9 L756.0 455.1 L753.2 457.2 L750.5 452.0 L747.8 444.7 L745.1 435.1 L742.3 424.0 L739.6 411.3 L736.9 396.8 L734.1 380.8 L731.4 363.0 L728.7 344.7 L725.9 328.9 L723.2 315.0 L720.5 300.8 L717.8 285.4 L715.0 269.6 L712.3 254.3 L709.6 240.7 L706.8 232.1 L704.1 228.2Z M816.0 170.7 L818.8 173.9 L821.5 177.1 L824.2 183.3 L827.0 190.4 L829.7 195.5 L832.4 187.1 L832.4 188.6 L829.7 190.1 L827.0 184.6 L824.2 178.8 L821.5 174.3 L818.8 171.4 L816.0 169.0Z M837.9 191.8 L840.6 207.7 L843.3 224.9 L846.1 245.6 L848.8 266.6 L851.5 285.0 L854.3 302.4 L857.0 318.1 L859.7 331.9 L862.4 337.5 L865.2 340.7 L867.9 350.2 L870.6 364.8 L873.4 382.1 L876.1 397.5 L878.8 410.9 L881.6 420.7 L884.3 423.0 L887.0 419.4 L889.7 416.1 L889.7 416.9 L887.0 417.7 L884.3 415.9 L881.6 408.7 L878.8 396.7 L876.1 382.6 L873.4 367.8 L870.6 353.5 L867.9 342.1 L865.2 333.9 L862.4 327.0 L859.7 316.6 L857.0 301.2 L854.3 284.3 L851.5 266.3 L848.8 247.5 L846.1 228.5 L843.3 211.3 L840.6 197.7 L837.9 187.8Z M930.7 165.8 L933.4 186.8 L936.2 209.4 L938.9 233.4 L941.6 258.5 L944.3 286.6 L947.1 313.4 L949.8 331.9 L952.5 348.8 L955.3 366.6 L958.0 385.9 L960.7 408.0 L963.5 421.6 L966.2 433.2 L968.9 443.5 L971.6 453.0 L974.4 460.0 L977.1 465.9 L979.8 471.1 L982.6 475.0 L985.3 465.0 L985.3 467.4 L982.6 469.9 L979.8 464.8 L977.1 458.5 L974.4 451.1 L971.6 442.1 L968.9 431.2 L966.2 418.9 L963.5 404.5 L960.7 387.4 L958.0 366.9 L955.3 347.9 L952.5 329.2 L949.8 309.6 L947.1 287.3 L944.3 261.1 L941.6 235.7 L938.9 212.9 L936.2 192.5 L933.4 175.5 L930.7 164.1Z M1012.6 348.9 L1015.3 361.9 L1018.1 377.3 L1020.8 399.0 L1023.5 422.9 L1026.2 439.6 L1029.0 451.4 L1031.7 466.0 L1034.4 480.5 L1037.2 490.0 L1039.9 481.1 L1042.6 466.8 L1042.6 473.1 L1039.9 479.5 L1037.2 477.9 L1034.4 465.8 L1031.7 451.2 L1029.0 436.3 L1026.2 421.2 L1023.5 402.7 L1020.8 382.5 L1018.1 366.0 L1015.3 354.7 L1012.6 347.4Z M1061.7 362.4 L1064.5 376.1 L1067.2 385.5 L1069.9 396.1 L1072.7 407.6 L1075.4 410.5 L1078.1 402.2 L1078.1 403.0 L1075.4 403.7 L1072.7 396.9 L1069.9 386.3 L1067.2 376.4 L1064.5 367.4 L1061.7 358.7Z M1086.3 400.1 L1089.0 406.1 L1091.8 416.0 L1094.5 428.2 L1097.2 422.5 L1100.0 414.0 L1100.0 417.4 L1097.2 420.7 L1094.5 418.8 L1091.8 409.4 L1089.0 402.9 L1086.3 399.7Z M1121.8 321.2 L1124.5 316.6 L1124.5 318.6 L1121.8 320.7Z M1146.4 283.0 L1149.1 274.9 L1149.1 277.6 L1146.4 280.3Z M1173.7 196.4 L1176.4 199.8 L1179.1 208.5 L1181.9 217.4 L1184.6 224.6 L1187.3 238.9 L1190.0 262.2 L1192.8 290.7 L1195.5 321.6 L1198.2 357.0 L1201.0 379.1 L1203.7 391.5 L1206.4 399.9 L1209.2 418.6 L1211.9 432.5 L1214.6 428.8 L1217.3 422.2 L1217.3 422.6 L1214.6 423.1 L1211.9 417.4 L1209.2 402.3 L1206.4 385.9 L1203.7 372.0 L1201.0 352.5 L1198.2 325.9 L1195.5 294.8 L1192.8 268.0 L1190.0 245.2 L1187.3 228.2 L1184.6 217.4 L1181.9 210.3 L1179.1 203.2 L1176.4 197.9 L1173.7 196.0Z M1231.0 400.0 L1233.7 416.3 L1236.5 431.7 L1239.2 445.9 L1241.9 459.7 L1244.6 468.2 L1247.4 472.0 L1250.1 477.7 L1252.8 485.1 L1255.6 491.4 L1258.3 495.6 L1261.0 500.0 L1263.8 506.5 L1266.5 511.2 L1269.2 508.3 L1271.9 499.8 L1271.9 503.5 L1269.2 507.2 L1266.5 506.0 L1263.8 500.8 L1261.0 495.1 L1258.3 490.2 L1255.6 484.8 L1252.8 478.1 L1250.1 471.1 L1247.4 464.6 L1244.6 457.2 L1241.9 446.2 L1239.2 432.6 L1236.5 419.4 L1233.7 407.1 L1231.0 397.8Z M1340.2 224.7 L1342.9 248.8 L1345.7 276.9 L1348.4 293.9 L1351.1 308.5 L1353.8 325.8 L1356.6 345.0 L1359.3 364.1 L1362.0 378.6 L1364.8 386.3 L1367.5 389.5 L1370.2 387.1 L1373.0 383.1 L1373.0 383.8 L1370.2 384.5 L1367.5 381.8 L1364.8 374.1 L1362.0 362.0 L1359.3 345.5 L1356.6 326.9 L1353.8 308.7 L1351.1 291.6 L1348.4 274.7 L1345.7 255.5 L1342.9 234.2 L1340.2 219.6Z M1397.5 294.1 L1400.2 309.6 L1403.0 325.2 L1405.7 334.1 L1408.4 338.8 L1411.2 333.8 L1413.9 348.3 L1416.6 362.3 L1419.4 377.1 L1422.1 393.5 L1424.8 410.0 L1427.6 426.7 L1430.3 441.0 L1433.0 451.8 L1435.7 456.2 L1438.5 447.8 L1441.2 439.4 L1441.2 443.6 L1438.5 447.7 L1435.7 447.5 L1433.0 438.8 L1430.3 425.8 L1427.6 410.5 L1424.8 394.4 L1422.1 378.8 L1419.4 364.2 L1416.6 351.3 L1413.9 340.3 L1411.2 332.4 L1408.4 331.0 L1405.7 323.3 L1403.0 312.5 L1400.2 299.7 L1397.5 289.8Z M1468.5 376.1 L1471.2 398.3 L1474.0 416.7 L1476.7 429.1 L1479.4 433.6 L1482.2 439.0 L1484.9 445.3 L1487.6 454.7 L1490.3 465.2 L1493.1 476.0 L1495.8 487.6 L1498.5 501.2 L1501.3 515.6 L1504.0 530.0 L1506.7 535.5 L1509.5 531.4 L1512.2 525.5 L1512.2 527.1 L1509.5 528.6 L1506.7 525.8 L1504.0 516.1 L1501.3 502.3 L1498.5 489.0 L1495.8 476.8 L1493.1 466.0 L1490.3 455.9 L1487.6 446.6 L1484.9 438.5 L1482.2 431.6 L1479.4 424.3 L1476.7 414.9 L1474.0 400.7 L1471.2 384.6 L1468.5 371.0Z" fill="#ff5252" fill-opacity="0.15" stroke="none"/>
<path d="M10.7 421.0 L13.4 413.0 L16.1 408.0 L18.9 410.5 L21.6 407.2 L24.3 395.9 L27.1 380.1 L29.8 362.0 L32.5 337.2 L35.2 315.1 L38.0 295.5 L40.7 279.2 L43.4 267.7 L46.2 259.0 L48.9 252.0 L51.6 245.9 L54.4 241.1 L57.1 240.5 L59.8 242.1 L62.6 241.6 L65.3 248.3 L68.0 261.2 L70.7 279.9 L73.5 302.3 L76.2 327.3 L78.9 350.3 L81.7 370.6 L84.4 387.8 L87.1 401.4 L89.9 402.8 L92.6 394.9 L95.3 381.4 L98.0 362.8 L100.8 337.8 L103.5 313.1 L106.2 292.3 L109.0 278.5 L111.7 270.6 L114.4 265.8 L117.2 262.9 L119.9 263.3 L122.6 262.2 L125.3 266.0 L128.1 275.9 L130.8 291.1 L133.5 311.4 L136.3 336.4 L139.0 359.3 L141.7 380.6 L144.5 400.4 L147.2 418.8 L149.9 436.6 L152.6 454.9 L155.4 473.1 L158.1 488.6 L160.8 500.8 L163.6 503.6 L166.3 502.0 L169.0 499.1 L171.8 496.5 L174.5 494.5 L177.2 496.0 L179.9 499.2 L182.7 499.2 L185.4 496.8 L188.1 493.9 L190.9 493.7 L193.6 495.6 L196.3 498.4 L199.1 501.1 L201.8 500.9 L204.5 495.1 L207.2 479.3 L210.0 454.8 L212.7 428.6 L215.4 406.7 L218.2 392.7 L220.9 386.1 L223.6 383.2 L226.4 382.1 L229.1 374.6 L231.8 368.3 L234.5 365.2 L237.3 364.0 L240.0 364.5 L242.7 362.4 L245.5 357.8 L248.2 349.4 L250.9 338.4 L253.7 326.7 L256.4 314.7 L259.1 304.2 L261.8 301.0 L264.6 302.5 L267.3 310.1 L270.0 322.6 L272.8 338.0 L275.5 353.9 L278.2 369.8 L281.0 385.5 L283.7 400.9 L286.4 416.0 L289.1 430.7 L291.9 445.3 L294.6 459.6 L297.3 471.3 L300.1 479.7 L302.8 485.2 L305.5 488.6 L308.2 488.9 L311.0 485.2 L313.7 476.1 L316.4 463.7 L319.2 449.0 L321.9 436.4 L324.6 426.7 L327.4 428.2 L330.1 438.7 L332.8 450.4 L335.6 460.8 L338.3 469.0 L341.0 475.7 L343.7 480.9 L346.5 482.3 L349.2 479.4 L351.9 471.6 L354.7 460.7 L357.4 447.2 L360.1 431.9 L362.9 415.2 L365.6 397.7 L368.3 381.0 L371.0 365.3 L373.8 350.6 L376.5 337.4 L379.2 325.3 L382.0 314.5 L384.7 305.8 L387.4 303.5 L390.2 305.4 L392.9 309.9 L395.6 317.3 L398.3 330.2 L401.1 349.0 L403.8 372.5 L406.5 383.6 L409.3 385.6 L412.0 380.3 L414.7 375.2 L417.5 374.2 L420.2 376.0 L422.9 378.2 L425.6 380.4 L428.4 379.8 L431.1 377.3 L433.8 373.9 L436.6 370.2 L439.3 367.6 L442.0 365.9 L444.8 364.8 L447.5 365.4 L450.2 363.7 L452.9 359.5 L455.7 349.5 L458.4 336.1 L461.1 322.4 L463.9 320.3 L466.6 326.9 L469.3 338.8 L472.1 355.0 L474.8 373.9 L477.5 389.5 L480.2 401.9 L483.0 411.5 L485.7 417.0 L488.4 418.4 L491.2 417.1 L493.9 413.2 L496.6 407.0 L499.4 399.6 L502.1 391.6 L504.8 383.3 L507.5 376.1 L510.3 370.8 L513.0 366.9 L515.7 365.7 L518.5 363.3 L521.2 358.8 L523.9 349.8 L526.7 337.7 L529.4 322.1 L532.1 304.3 L534.8 285.4 L537.6 266.0 L540.3 247.4 L543.0 230.2 L545.8 217.5 L548.5 209.1 L551.2 203.6 L554.0 204.8 L556.7 209.6 L559.4 211.9 L562.1 212.8 L564.9 216.9 L567.6 224.4 L570.3 236.4 L573.1 252.3 L575.8 272.2 L578.5 292.2 L581.3 309.2 L584.0 314.5 L586.7 311.9 L589.4 303.2 L592.2 291.3 L594.9 278.8 L597.6 266.4 L600.4 254.7 L603.1 245.4 L605.8 237.7 L608.6 230.6 L611.3 222.7 L614.0 214.4 L616.7 207.2 L619.5 215.7 L622.2 230.2 L624.9 244.4 L627.7 256.8 L630.4 268.1 L633.1 279.4 L635.9 292.0 L638.6 305.7 L641.3 320.4 L644.0 336.4 L646.8 350.4 L649.5 362.4 L652.2 371.8 L655.0 374.7 L657.7 374.2 L660.4 375.4 L663.2 377.8 L665.9 381.3 L668.6 384.8 L671.3 382.5 L674.1 374.9 L676.8 359.7 L679.5 337.2 L682.3 314.0 L685.0 291.8 L687.7 272.4 L690.5 257.0 L693.2 244.6 L695.9 235.9 L698.6 229.8 L701.4 227.7 L704.1 228.2 L706.8 232.1 L709.6 240.7 L712.3 254.3 L715.0 269.6 L717.8 285.4 L720.5 300.8 L723.2 315.0 L725.9 328.9 L728.7 344.7 L731.4 363.0 L734.1 380.8 L736.9 396.8 L739.6 411.3 L742.3 424.0 L745.1 435.1 L747.8 444.7 L750.5 452.0 L753.2 457.2 L756.0 455.1 L758.7 447.5 L761.4 437.6 L764.2 426.3 L766.9 414.0 L769.6 399.9 L772.4 384.0 L775.1 364.2 L777.8 341.4 L780.5 327.5 L783.3 318.9 L786.0 311.4 L788.7 302.9 L791.5 289.0 L794.2 269.8 L796.9 247.8 L799.7 224.7 L802.4 204.7 L805.1 188.1 L807.8 176.6 L810.6 168.9 L813.3 167.3 L816.0 169.0 L818.8 171.4 L821.5 174.3 L824.2 178.8 L827.0 184.6 L829.7 190.1 L832.4 188.6 L835.1 183.7 L837.9 187.8 L840.6 197.7 L843.3 211.3 L846.1 228.5 L848.8 247.5 L851.5 266.3 L854.3 284.3 L857.0 301.2 L859.7 316.6 L862.4 327.0 L865.2 333.9 L867.9 342.1 L870.6 353.5 L873.4 367.8 L876.1 382.6 L878.8 396.7 L881.6 408.7 L884.3 415.9 L887.0 417.7 L889.7 416.9 L892.5 412.4 L895.2 403.0 L897.9 387.8 L900.7 362.5 L903.4 327.4 L906.1 295.5 L908.9 268.8 L911.6 246.1 L914.3 226.7 L917.0 209.1 L919.8 192.5 L922.5 179.3 L925.2 169.6 L928.0 162.5 L930.7 164.1 L933.4 175.5 L936.2 192.5 L938.9 212.9 L941.6 235.7 L944.3 261.1 L947.1 287.3 L949.8 309.6 L952.5 329.2 L955.3 347.9 L958.0 366.9 L960.7 387.4 L963.5 404.5 L966.2 418.9 L968.9 431.2 L971.6 442.1 L974.4 451.1 L977.1 458.5 L979.8 464.8 L982.6 469.9 L985.3 467.4 L988.0 457.8 L990.8 438.8 L993.5 419.7 L996.2 401.8 L998.9 386.5 L1001.7 373.1 L1004.4 362.2 L1007.1 353.0 L1009.9 345.9 L1012.6 347.4 L1015.3 354.7 L1018.1 366.0 L1020.8 382.5 L1023.5 402.7 L1026.2 421.2 L1029.0 436.3 L1031.7 451.2 L1034.4 465.8 L1037.2 477.9 L1039.9 479.5 L1042.6 473.1 L1045.4 455.1 L1048.1 432.0 L1050.8 407.5 L1053.5 383.6 L1056.3 363.7 L1059.0 355.0 L1061.7 358.7 L1064.5 367.4 L1067.2 376.4 L1069.9 386.3 L1072.7 396.9 L1075.4 403.7 L1078.1 403.0 L1080.8 401.1 L1083.6 399.3 L1086.3 399.7 L1089.0 402.9 L1091.8 409.4 L1094.5 418.8 L1097.2 420.7 L1100.0 417.4 L1102.7 407.9 L1105.4 393.6 L1108.1 373.6 L1110.9 348.0 L1113.6 331.7 L1116.3 322.7 L1119.1 320.1 L1121.8 320.7 L1124.5 318.6 L1127.2 314.3 L1130.0 305.7 L1132.7 296.4 L1135.4 290.7 L1138.2 284.7 L1140.9 280.2 L1143.6 277.6 L1146.4 280.3 L1149.1 277.6 L1151.8 270.0 L1154.6 259.0 L1157.3 245.4 L1160.0 229.3 L1162.7 213.9 L1165.5 202.8 L1168.2 197.7 L1170.9 195.7 L1173.7 196.0 L1176.4 197.9 L1179.1 203.2 L1181.9 210.3 L1184.6 217.4 L1187.3 228.2 L1190.0 245.2 L1192.8 268.0 L1195.5 294.8 L1198.2 325.9 L1201.0 352.5 L1203.7 372.0 L1206.4 385.9 L1209.2 402.3 L1211.9 417.4 L1214.6 423.1 L1217.3 422.6 L1220.1 417.6 L1222.8 410.5 L1225.5 402.7 L1228.3 395.7 L1231.0 397.8 L1233.7 407.1 L1236.5 419.4 L1239.2 432.6 L1241.9 446.2 L1244.6 457.2 L1247.4 464.6 L1250.1 471.1 L1252.8 478.1 L1255.6 484.8 L1258.3 490.2 L1261.0 495.1 L1263.8 500.8 L1266.5 506.0 L1269.2 507.2 L1271.9 503.5 L1274.7 495.7 L1277.4 482.9 L1280.1 468.1 L1282.9 455.1 L1285.6 445.6 L1288.3 440.2 L1291.1 435.3 L1293.8 428.0 L1296.5 417.2 L1299.2 403.9 L1302.0 389.0 L1304.7 374.2 L1307.4 357.7 L1310.2 339.3 L1312.9 321.6 L1315.6 304.9 L1318.4 289.1 L1321.1 274.6 L1323.8 260.9 L1326.5 248.2 L1329.3 236.4 L1332.0 226.0 L1334.7 219.1 L1337.5 214.5 L1340.2 219.6 L1342.9 234.2 L1345.7 255.5 L1348.4 274.7 L1351.1 291.6 L1353.8 308.7 L1356.6 326.9 L1359.3 345.5 L1362.0 362.0 L1364.8 374.1 L1367.5 381.8 L1370.2 384.5 L1373.0 383.8 L1375.7 377.3 L1378.4 361.9 L1381.1 342.8 L1383.9 324.1 L1386.6 308.6 L1389.3 297.1 L1392.1 289.8 L1394.8 285.5 L1397.5 289.8 L1400.2 299.7 L1403.0 312.5 L1405.7 323.3 L1408.4 331.0 L1411.2 332.4 L1413.9 340.3 L1416.6 351.3 L1419.4 364.2 L1422.1 378.8 L1424.8 394.4 L1427.6 410.5 L1430.3 425.8 L1433.0 438.8 L1435.7 447.5 L1438.5 447.7 L1441.2 443.6 L1443.9 437.9 L1446.7 431.8 L1449.4 426.5 L1452.1 426.4 L1454.9 422.3 L1457.6 411.7 L1460.3 394.8 L1463.0 375.5 L1465.8 365.9 L1468.5 371.0 L1471.2 384.6 L1474.0 400.7 L1476.7 414.9 L1479.4 424.3 L1482.2 431.6 L1484.9 438.5 L1487.6 446.6 L1490.3 455.9 L1493.1 466.0 L1495.8 476.8 L1498.5 489.0 L1501.3 502.3 L1504.0 516.1 L1506.7 525.8 L1509.5 528.6 L1512.2 527.1 L1514.9 522.8 L1517.6 515.5 L1520.4 504.7 L1523.1 490.0 L1525.8 477.1 L1528.6 466.8 L1531.3 455.1 L1534.0 441.8 L1536.8 429.8 L1539.5 419.9 L1542.2 408.7 L1544.9 393.4 L1547.7 379.6 L1550.4 379.6" fill="none" stroke="#2f7fc4" stroke-width="1"/>
<path d="M16.1 403.0 L18.9 413.0 M57.1 240.0 L59.8 243.8 M62.6 241.0 L65.3 255.0 L68.0 274.2 L70.7 298.6 L73.5 324.7 L76.2 352.2 L78.9 373.3 L81.7 390.9 L84.4 405.0 L87.1 415.0 L89.9 404.1 M117.2 260.0 L119.9 263.8 M122.6 261.0 L125.3 269.9 L128.1 285.8 L130.8 306.2 L133.5 331.7 L136.3 361.3 L139.0 382.3 L141.7 401.9 L144.5 420.1 L147.2 437.2 L149.9 454.4 L152.6 473.2 L155.4 491.3 L158.1 504.1 L160.8 513.0 L163.6 506.3 M174.5 492.5 L177.2 497.5 L179.9 502.5 M190.9 493.6 L193.6 497.4 L196.3 501.2 L199.1 503.8 M237.3 362.8 L240.0 365.0 M261.8 297.9 L264.6 304.0 L267.3 317.7 L270.0 335.2 L272.8 353.4 L275.5 369.8 L278.2 385.6 L281.0 401.2 L283.7 416.4 L286.4 431.0 L289.1 445.5 L291.9 459.9 L294.6 474.0 L297.3 483.0 L300.1 488.1 L302.8 490.7 L305.5 492.0 L308.2 489.3 M324.6 417.0 L327.4 429.8 L330.1 449.2 L332.8 462.0 L335.6 471.2 L338.3 477.3 L341.0 482.4 L343.7 486.0 L346.5 483.7 M387.4 301.2 L390.2 307.3 L392.9 314.4 L395.6 324.8 L398.3 343.0 L401.1 367.9 L403.8 396.0 L406.5 394.8 L409.3 387.5 M417.5 373.3 L420.2 377.7 L422.9 380.5 L425.6 382.5 M444.8 363.8 L447.5 366.0 M463.9 318.2 L466.6 333.4 L469.3 350.6 L472.1 371.2 L474.8 392.8 L477.5 405.1 L480.2 414.3 L483.0 421.2 L485.7 422.5 L488.4 419.8 M551.2 198.0 L554.0 206.0 L556.7 214.5 L559.4 214.1 L562.1 213.8 L564.9 220.9 L567.6 231.9 L570.3 248.3 L573.1 268.3 L575.8 292.1 L578.5 312.3 L581.3 326.2 L584.0 319.7 M616.7 200.0 L619.5 224.3 L622.2 244.7 L624.9 258.5 L627.7 269.2 L630.4 279.5 L633.1 290.6 L635.9 304.6 L638.6 319.4 L641.3 335.0 L644.0 352.4 L646.8 364.5 L649.5 374.5 L652.2 381.2 L655.0 377.5 M657.7 373.8 L660.4 376.5 L663.2 380.2 L665.9 384.7 L668.6 388.2 M701.4 225.7 L704.1 228.6 L706.8 236.0 L709.6 249.3 L712.3 267.8 L715.0 284.9 L717.8 301.3 L720.5 316.2 L723.2 329.3 L725.9 342.7 L728.7 360.6 L731.4 381.2 L734.1 398.6 L736.9 412.7 L739.6 425.8 L742.3 436.6 L745.1 446.1 L747.8 454.4 L750.5 459.2 L753.2 462.5 M813.3 165.7 L816.0 170.7 L818.8 173.9 L821.5 177.1 L824.2 183.3 L827.0 190.4 L829.7 195.5 M835.1 178.8 L837.9 191.8 L840.6 207.7 L843.3 224.9 L846.1 245.6 L848.8 266.6 L851.5 285.0 L854.3 302.4 L857.0 318.1 L859.7 331.9 L862.4 337.5 L865.2 340.7 L867.9 350.2 L870.6 364.8 L873.4 382.1 L876.1 397.5 L878.8 410.9 L881.6 420.7 L884.3 423.0 L887.0 419.4 M928.0 155.5 L930.7 165.8 L933.4 186.8 L936.2 209.4 L938.9 233.4 L941.6 258.5 L944.3 286.6 L947.1 313.4 L949.8 331.9 L952.5 348.8 L955.3 366.6 L958.0 385.9 L960.7 408.0 L963.5 421.6 L966.2 433.2 L968.9 443.5 L971.6 453.0 L974.4 460.0 L977.1 465.9 L979.8 471.1 L982.6 475.0 M1009.9 338.8 L1012.6 348.9 L1015.3 361.9 L1018.1 377.3 L1020.8 399.0 L1023.5 422.9 L1026.2 439.6 L1029.0 451.4 L1031.7 466.0 L1034.4 480.5 L1037.2 490.0 L1039.9 481.1 M1059.0 346.2 L1061.7 362.4 L1064.5 376.1 L1067.2 385.5 L1069.9 396.1 L1072.7 407.6 L1075.4 410.5 M1083.6 397.5 L1086.3 400.1 L1089.0 406.1 L1091.8 416.0 L1094.5 428.2 L1097.2 422.5 M1119.1 317.5 L1121.8 321.2 M1143.6 275.0 L1146.4 283.0 M1170.9 193.7 L1173.7 196.4 L1176.4 199.8 L1179.1 208.5 L1181.9 217.4 L1184.6 224.6 L1187.3 238.9 L1190.0 262.2 L1192.8 290.7 L1195.5 321.6 L1198.2 357.0 L1201.0 379.1 L1203.7 391.5 L1206.4 399.9 L1209.2 418.6 L1211.9 432.5 L1214.6 428.8 M1228.3 388.8 L1231.0 400.0 L1233.7 416.3 L1236.5 431.7 L1239.2 445.9 L1241.9 459.7 L1244.6 468.2 L1247.4 472.0 L1250.1 477.7 L1252.8 485.1 L1255.6 491.4 L1258.3 495.6 L1261.0 500.0 L1263.8 506.5 L1266.5 511.2 L1269.2 508.3 M1337.5 210.0 L1340.2 224.7 L1342.9 248.8 L1345.7 276.9 L1348.4 293.9 L1351.1 308.5 L1353.8 325.8 L1356.6 345.0 L1359.3 364.1 L1362.0 378.6 L1364.8 386.3 L1367.5 389.5 L1370.2 387.1 M1394.8 281.2 L1397.5 294.1 L1400.2 309.6 L1403.0 325.2 L1405.7 334.1 L1408.4 338.8 L1411.2 333.8 L1413.9 348.3 L1416.6 362.3 L1419.4 377.1 L1422.1 393.5 L1424.8 410.0 L1427.6 426.7 L1430.3 441.0 L1433.0 451.8 L1435.7 456.2 L1438.5 447.8 M1465.8 356.3 L1468.5 376.1 L1471.2 398.3 L1474.0 416.7 L1476.7 429.1 L1479.4 433.6 L1482.2 439.0 L1484.9 445.3 L1487.6 454.7 L1490.3 465.2 L1493.1 476.0 L1495.8 487.6 L1498.5 501.2 L1501.3 515.6 L1504.0 530.0 L1506.7 535.5 L1509.5 531.4" fill="none" stroke="#ff5252" stroke-width="1.8" stroke-linejoin="round" stroke-linecap="round"/>
<path d="M10.7 413.0 L13.4 405.0 L16.1 403.0 M18.9 413.0 L21.6 403.9 L24.3 384.6 L27.1 364.2 L29.8 344.0 L32.5 312.4 L35.2 293.0 L38.0 275.8 L40.7 263.0 L43.4 256.3 L46.2 250.3 L48.9 244.9 L51.6 239.8 L54.4 236.2 L57.1 240.0 M59.8 243.8 L62.6 241.0 M89.9 404.1 L92.6 387.0 L95.3 367.9 L98.0 344.2 L100.8 312.9 L103.5 288.3 L106.2 271.5 L109.0 264.7 L111.7 262.7 L114.4 261.1 L117.2 260.0 M119.9 263.8 L122.6 261.0 M163.6 506.3 L166.3 500.3 L169.0 496.2 L171.8 493.8 L174.5 492.5 M179.9 502.5 L182.7 499.1 L185.4 494.4 L188.1 491.0 L190.9 493.6 M199.1 503.8 L201.8 500.7 L204.5 489.3 L207.2 463.5 L210.0 430.3 L212.7 402.4 L215.4 384.7 L218.2 378.8 L220.9 379.4 L223.6 380.3 L226.4 381.0 L229.1 367.1 L231.8 362.0 L234.5 362.0 L237.3 362.8 M240.0 365.0 L242.7 360.3 L245.5 353.2 L248.2 341.0 L250.9 327.4 L253.7 315.0 L256.4 302.6 L259.1 293.8 L261.8 297.9 M308.2 489.3 L311.0 481.4 L313.7 467.0 L316.4 451.2 L319.2 434.4 L321.9 423.7 L324.6 417.0 M346.5 483.7 L349.2 476.5 L351.9 463.9 L354.7 449.9 L357.4 433.6 L360.1 416.7 L362.9 398.4 L365.6 380.2 L368.3 364.3 L371.0 349.6 L373.8 335.8 L376.5 324.2 L379.2 313.3 L382.0 303.7 L384.7 297.0 L387.4 301.2 M409.3 387.5 L412.0 375.1 L414.7 370.0 L417.5 373.3 M425.6 382.5 L428.4 379.1 L431.1 374.9 L433.8 370.5 L436.6 366.5 L439.3 364.9 L442.0 364.2 L444.8 363.8 M447.5 366.0 L450.2 362.0 L452.9 355.2 L455.7 339.6 L458.4 322.8 L461.1 308.8 L463.9 318.2 M488.4 419.8 L491.2 415.9 L493.9 409.3 L496.6 400.8 L499.4 392.2 L502.1 383.5 L504.8 375.1 L507.5 368.9 L510.3 365.4 L513.0 363.0 L515.7 364.5 L518.5 360.9 L521.2 354.3 L523.9 340.8 L526.7 325.6 L529.4 306.6 L532.1 286.5 L534.8 266.6 L537.6 246.6 L540.3 228.7 L543.0 213.0 L545.8 204.9 L548.5 200.7 L551.2 198.0 M584.0 319.7 L586.7 309.3 L589.4 294.6 L592.2 279.3 L594.9 266.3 L597.6 254.1 L600.4 243.0 L603.1 236.1 L605.8 230.1 L608.6 223.5 L611.3 214.7 L614.0 206.0 L616.7 200.0 M655.0 377.5 L657.7 373.8 M668.6 388.2 L671.3 380.2 L674.1 367.3 L676.8 344.5 L679.5 314.8 L682.3 290.7 L685.0 269.6 L687.7 253.1 L690.5 241.5 L693.2 232.2 L695.9 227.2 L698.6 223.8 L701.4 225.7 M753.2 462.5 L756.0 452.9 L758.7 439.9 L761.4 427.6 L764.2 415.0 L766.9 401.7 L769.6 385.8 L772.4 368.0 L775.1 344.4 L777.8 318.7 L780.5 313.6 L783.3 310.3 L786.0 303.8 L788.7 294.5 L791.5 275.1 L794.2 250.5 L796.9 225.8 L799.7 201.7 L802.4 184.6 L805.1 171.5 L807.8 165.2 L810.6 161.2 L813.3 165.7 M829.7 195.5 L832.4 187.1 L835.1 178.8 M887.0 419.4 L889.7 416.1 L892.5 407.9 L895.2 393.7 L897.9 372.6 L900.7 337.1 L903.4 292.3 L906.1 263.5 L908.9 242.2 L911.6 223.3 L914.3 207.2 L917.0 191.5 L919.8 175.9 L922.5 166.1 L925.2 159.8 L928.0 155.5 M982.6 475.0 L985.3 465.0 L988.0 448.1 L990.8 419.8 L993.5 400.5 L996.2 384.0 L998.9 371.3 L1001.7 359.7 L1004.4 351.3 L1007.1 343.9 L1009.9 338.8 M1039.9 481.1 L1042.6 466.8 L1045.4 437.1 L1048.1 408.9 L1050.8 383.0 L1053.5 359.7 L1056.3 343.8 L1059.0 346.2 M1075.4 410.5 L1078.1 402.2 L1080.8 399.1 L1083.6 397.5 M1097.2 422.5 L1100.0 414.0 L1102.7 398.5 L1105.4 379.3 L1108.1 353.5 L1110.9 322.3 L1113.6 315.4 L1116.3 313.8 L1119.1 317.5 M1121.8 321.2 L1124.5 316.6 L1127.2 310.0 L1130.0 297.1 L1132.7 287.1 L1135.4 285.0 L1138.2 278.7 L1140.9 275.6 L1143.6 275.0 M1146.4 283.0 L1149.1 274.9 L1151.8 262.5 L1154.6 248.0 L1157.3 231.8 L1160.0 213.2 L1162.7 198.5 L1165.5 191.8 L1168.2 192.5 L1170.9 193.7 M1214.6 428.8 L1217.3 422.2 L1220.1 412.6 L1222.8 403.4 L1225.5 394.9 L1228.3 388.8 M1269.2 508.3 L1271.9 499.8 L1274.7 487.9 L1277.4 470.2 L1280.1 453.3 L1282.9 442.2 L1285.6 436.0 L1288.3 434.8 L1291.1 430.5 L1293.8 420.7 L1296.5 406.4 L1299.2 390.7 L1302.0 374.1 L1304.7 359.5 L1307.4 341.2 L1310.2 320.9 L1312.9 303.8 L1315.6 288.3 L1318.4 273.3 L1321.1 260.0 L1323.8 247.3 L1326.5 235.4 L1329.3 224.7 L1332.0 215.7 L1334.7 212.1 L1337.5 210.0 M1370.2 387.1 L1373.0 383.1 L1375.7 370.9 L1378.4 346.5 L1381.1 323.7 L1383.9 305.4 L1386.6 293.1 L1389.3 285.6 L1392.1 282.5 L1394.8 281.2 M1438.5 447.8 L1441.2 439.4 L1443.9 432.2 L1446.7 425.8 L1449.4 421.2 L1452.1 426.2 L1454.9 418.3 L1457.6 401.1 L1460.3 377.8 L1463.0 356.2 L1465.8 356.3 M1509.5 531.4 L1512.2 525.5 L1514.9 518.4 L1517.6 508.3 L1520.4 493.8 L1523.1 475.2 L1525.8 464.3 L1528.6 456.4 L1531.3 443.4 L1534.0 428.5 L1536.8 417.8 L1539.5 410.0 L1542.2 397.4 L1544.9 378.2 L1547.7 365.9 L1550.4 365.9" fill="none" stroke="#00d860" stroke-width="1.8" stroke-linejoin="round" stroke-linecap="round"/>
</svg>
<div class="ttl">Harmonic Oscillator</div>
<div class="div" style="left:41.3px;top:200.5px;color:#ff5252"><span class="tri dn">▼</span>DIV</div><div class="div" style="left:540.2px;top:173.5px;color:#ff5252"><span class="tri dn">▼</span>DIV</div><div class="div" style="left:812px;top:154.5px;color:#ff5252"><span class="tri dn">▼</span>DIV</div><div class="div" style="left:1154.4px;top:153.5px;color:#ff5252"><span class="tri dn">▼</span>DIV</div><div class="div" style="left:158.5px;top:505.5px;color:#00c853"><span class="tri up">▲</span>DIV</div><div class="div" style="left:1267px;top:456px;color:#00c853"><span class="tri up">▲</span>DIV</div>
<div class="pl" style="top:27px">120.00</div><div class="pl" style="top:71px">110.00</div><div class="pl" style="top:115px">100.00</div><div class="pl" style="top:159px">90.00</div><div class="pl" style="top:203px">80.00</div><div class="pl" style="top:247px">70.00</div><div class="pl" style="top:291px">60.00</div><div class="pl" style="top:336px">50.00</div><div class="pl" style="top:380px">40.00</div><div class="pl" style="top:424px">30.00</div><div class="pl" style="top:468px">20.00</div><div class="pl" style="top:512px">10.00</div><div class="pl" style="top:556px">0.00</div><div class="pl" style="top:600px">−10.00</div><div class="pl" style="top:644px">−20.00</div><div class="pl" style="top:688px">−30.00</div><div class="pl" style="top:732px">−40.00</div>
<div class="tl" style="left:30.2px">Sep</div><div class="tl" style="left:89.1px">Nov</div><div class="tl yr" style="left:145.1px">2022</div><div class="tl" style="left:201.3px">Mar</div><div class="tl" style="left:257.5px">May</div><div class="tl" style="left:316.3px">Jul</div><div class="tl" style="left:372.5px">Sep</div><div class="tl" style="left:431.0px">Nov</div><div class="tl yr" style="left:487.3px">2023</div><div class="tl" style="left:543.0px">Mar</div><div class="tl" style="left:599.3px">May</div><div class="tl" style="left:658.0px">Jul</div><div class="tl" style="left:714.3px">Sep</div><div class="tl" style="left:773.0px">Nov</div><div class="tl yr" style="left:829.5px">2024</div><div class="tl" style="left:885.3px">Mar</div><div class="tl" style="left:944.3px">May</div><div class="tl" style="left:1000.3px">Jul</div><div class="tl" style="left:1059.0px">Sep</div><div class="tl" style="left:1115.3px">Nov</div><div class="tl yr" style="left:1171.8px">2025</div><div class="tl" style="left:1227.5px">Mar</div><div class="tl" style="left:1283.5px">May</div><div class="tl" style="left:1342.5px">Jul</div><div class="tl" style="left:1398.5px">Sep</div><div class="tl" style="left:1457.3px">Nov</div><div class="tl yr" style="left:1514.0px">2026</div><div class="tl" style="left:1570.0px">Mar</div><div class="tl" style="left:1626.0px">May</div><div class="tl" style="left:1685.0px">Jul</div>
<div class="tbl"><div class="tr"><div class="tc l gy">Regime</div><div class="tc r gr">BIAS <span class="tt">▲</span></div></div><div class="tr"><div class="tc l gy">Votes</div><div class="tc r gr">4/7</div></div><div class="tr"><div class="tc l gy">Volume</div><div class="tc r rd">LOW</div></div><div class="tr"><div class="tc l gy">Strength</div><div class="tc r or">57%</div></div><div class="tr"><div class="tc l gr">RSI <span class="tt">▲</span></div><div class="tc r gr">SRSI <span class="tt">▲</span></div></div><div class="tr"><div class="tc l gr">MACD <span class="tt">▲</span></div><div class="tc r gr">MOM <span class="tt">▲</span></div></div><div class="tr"><div class="tc l rd">EMA <span class="tt">▼</span></div><div class="tc r gy2">VOL —</div></div></div>
<div class="votes">4/7<span class="tri up" style="margin-left:5px">▲</span></div>
<svg class="logo" width="30" height="15" viewBox="0 0 30 15"><path fill="#dcdcdc" d="M0 0h12v15H5.8V6.5H0z"/><circle cx="16.9" cy="2.9" r="2.9" fill="#dcdcdc"/><path fill="#dcdcdc" d="M22.9 0H30L23.7 15H16.9z"/></svg>
<div class="logot">TradingView</div>
</body></html>
